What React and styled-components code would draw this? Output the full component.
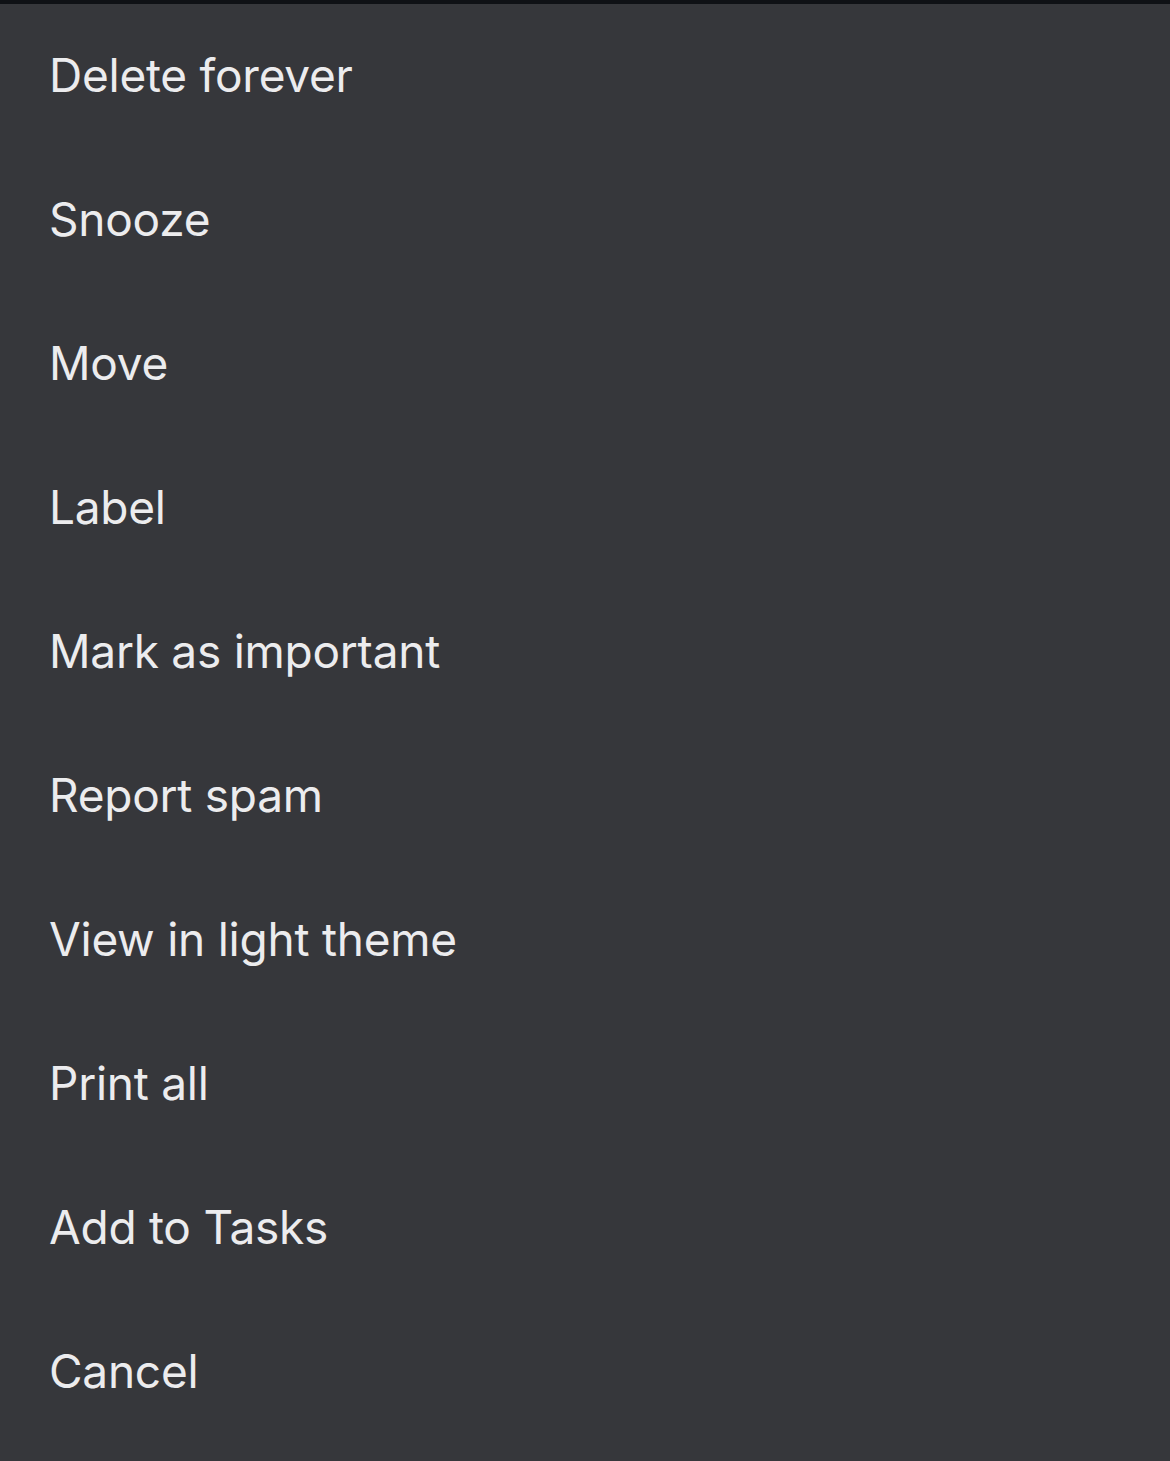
import React from 'react';
import styled, { createGlobalStyle } from 'styled-components';

const SHEET_BG = '#36373b';
const TOP_EDGE = '#0f1115';
const ITEM_TEXT = '#ececee';

const GlobalStyle = createGlobalStyle`
  html, body {
    margin: 0;
    padding: 0;
    background: ${SHEET_BG};
  }
`;

const Sheet = styled.div`
  min-height: 100vh;
  background: ${SHEET_BG};
  border-top: 4px solid ${TOP_EDGE};
  box-sizing: border-box;
  display: flex;
  flex-direction: column;
  font-family: Inter, "Noto Sans", sans-serif;
`;

const MenuItem = styled.button`
  height: 144px;
  display: flex;
  align-items: center;
  padding: 0 0 3px 49px;
  border: none;
  background: transparent;
  color: ${ITEM_TEXT};
  font-family: inherit;
  font-size: 46px;
  font-weight: 400;
  letter-spacing: -0.25px;
  text-align: left;
  cursor: pointer;
`;

const ACTIONS = [
  'Delete forever',
  'Snooze',
  'Move',
  'Label',
  'Mark as important',
  'Report spam',
  'View in light theme',
  'Print all',
  'Add to Tasks',
  'Cancel',
];

export default function App() {
  return (
    <>
      <GlobalStyle />
      <Sheet>
        {ACTIONS.map((label) => (
          <MenuItem key={label}>{label}</MenuItem>
        ))}
      </Sheet>
    </>
  );
}
